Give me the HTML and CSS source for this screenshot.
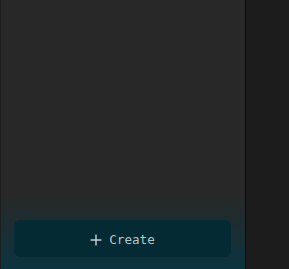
FILE: index.html
```html
<!DOCTYPE html>
<html>
<head>
<meta charset="utf-8">
<link rel="stylesheet" href="styles.css">
</head>
<body>
<div class="app">
  <aside class="sidebar">
    <div class="spacer"></div>
    <div class="footer">
      <button class="create"><svg class="plus" width="12" height="12" viewBox="0 0 12 12"><path d="M6 0.5V11.5M0.5 6H11.5" stroke="#c4d0d2" stroke-width="1.4" fill="none"/></svg><span class="label">Create</span></button>
    </div>
  </aside>
  <main class="main"></main>
</div>
</body>
</html>
```
FILE: styles.css
```css
html, body { margin: 0; padding: 0; height: 100%; }
body { background: #1c1c1c; font-family: "DejaVu Sans Mono", monospace; }
.app { display: flex; height: 269px; width: 289px; }
.sidebar {
  width: 244px;
  flex: none;
  display: flex;
  flex-direction: column;
  background: linear-gradient(180deg, #282828 0px, #282828 195px, #0b3440 269px);
  border-left: 1px solid #1e1e1e;
  border-right: 1px solid #0c0c0c;
  box-sizing: content-box;
}
.spacer { flex: 1; }
.footer { padding: 0 14px 12px 13px; }
.create {
  width: 100%;
  height: 37px;
  border: none;
  border-radius: 6px;
  background: #042a33;
  color: #b7c6c9;
  font-family: "DejaVu Sans Mono", monospace;
  font-size: 12.6px;
  display: flex;
  align-items: center;
  justify-content: center;
  gap: 7px;
  padding: 2px 0 0 0;
}
.plus { display: block; margin-top: 0; }
.label { display: block; }
.main { flex: 1; background: #1c1c1c; }
```
